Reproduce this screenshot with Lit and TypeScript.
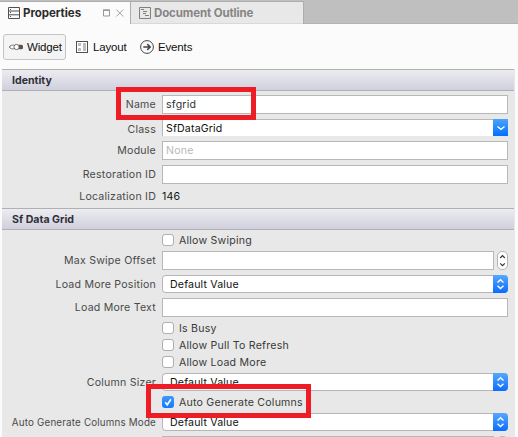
import { LitElement, html, css, svg, nothing } from "lit";
import { customElement } from "lit/decorators.js";
import { styleMap } from "lit/directives/style-map.js";

type Kind = "text" | "combo" | "select" | "stepper" | "check" | "static";

interface Row {
  kind: Kind;
  label?: string;
  value?: string;
  placeholder?: string;
  checked?: boolean;
  small?: boolean;
  gap: number;
}

const identity: Row[] = [
  { kind: "text", label: "Name", value: "sfgrid", gap: 4 },
  { kind: "combo", label: "Class", value: "SfDataGrid", gap: 5 },
  { kind: "text", label: "Module", placeholder: "None", gap: 4 },
  { kind: "text", label: "Restoration ID", gap: 5 },
  { kind: "static", label: "Localization ID", value: "146", gap: 3 },
];

const dataGrid: Row[] = [
  { kind: "check", value: "Allow Swiping", gap: 4 },
  { kind: "stepper", label: "Max Swipe Offset", gap: 5 },
  { kind: "select", label: "Load More Position", value: "Default Value", gap: 5 },
  { kind: "text", label: "Load More Text", gap: 5 },
  { kind: "check", value: "Is Busy", gap: 5 },
  { kind: "check", value: "Allow Pull To Refresh", gap: 5 },
  { kind: "check", value: "Allow Load More", gap: 5 },
  { kind: "select", label: "Column Sizer", value: "Default Value", gap: 5 },
  { kind: "check", value: "Auto Generate Columns", checked: true, gap: 5 },
  { kind: "select", label: "Auto Generate Columns Mode", value: "Default Value", small: true, gap: 5 },
  { kind: "stepper", gap: 5 },
];

@customElement("app-root")
export class AppRoot extends LitElement {
  static styles = css`
    :host {
      display: block;
      position: relative;
      width: 518px;
      height: 437px;
      overflow: hidden;
      background: #fbfbfb;
      font-family: Inter, "Liberation Sans", sans-serif;
      font-size: 10.6px;
      letter-spacing: 0.22px;
      color: #4a4a4a;
      white-space: nowrap;
    }
    * { box-sizing: border-box; }
    svg { display: block; flex: none; }
    .tabs {
      display: flex;
      height: 24px;
      padding-top: 1px;
      background: #bfbfbf;
      box-shadow: inset 0 -1px #b3b3b3;
    }
    .tab {
      display: flex;
      align-items: center;
      height: 23px;
      border-top: 1px solid #adadad;
      border-right: 1px solid #adadad;
      font-size: 11.5px;
      font-weight: 700;
    }
    .tab.active { width: 131px; padding-left: 8px; background: #fbfbfb; color: #2b2b2b; }
    .tab.idle { width: 173px; padding-left: 8px; background: #e8e8e8; color: #858585; box-shadow: inset 0 -1px #d9d9d9; }
    .tab.active .name { width: 80px; margin-left: 3px; letter-spacing: -0.05px; }
    .tab.idle .name { margin-left: 3px; letter-spacing: -0.12px; }
    .tools {
      display: flex;
      align-items: center;
      height: 45px;
      padding: 1px 0 0 3px;
      font-family: "Liberation Sans", sans-serif;
      font-size: 11.5px;
      letter-spacing: -0.15px;
      color: #111;
    }
    .tool { display: flex; align-items: center; height: 26px; }
    .tool span { line-height: 24px; }
    .tool.on { width: 63px; padding-left: 5px; gap: 4px; border: 1px solid #c4c4c4; border-radius: 3px; background: #f4f4f4; }
    .tool.layout { margin-left: 10px; gap: 5px; width: 64px; }
    .tool.events { gap: 4px; }
    .body { width: 513px; height: 368px; margin-left: 2px; background: #e8e8e8; overflow: hidden; }
    .group.identity { height: 139px; }
    .head {
      width: 512px;
      height: 22px;
      padding-left: 10px;
      line-height: 21px;
      border-top: 1px solid #b0b0b3;
      border-bottom: 1px solid #b0b0b3;
      background: linear-gradient(#ececf1, #d0d0de);
      font-weight: 700;
      letter-spacing: 0;
      color: #303038;
    }
    .row { display: flex; align-items: center; }
    .label { flex: none; width: 154px; margin-right: 6px; text-align: right; line-height: 18px; }
    .label.small { font-size: 9.8px; letter-spacing: 0.18px; }
    .text, .stepper { height: 19px; }
    .combo, .select { height: 18px; }
    .check { height: 12px; }
    .static { height: 18px; }
    .select .label, .static .label { padding-top: 2px; }
    .combo .label { padding-top: 4px; }
    .field { width: 346px; height: 19px; padding-left: 3px; border: 1px solid #b8b8b8; background: #fff; line-height: 18px; color: #333; }
    .stepper .field { width: 332px; }
    .ghost { color: #b9b9b9; }
    .picker { display: flex; justify-content: space-between; width: 346px; height: 18px; line-height: 20px; letter-spacing: 0.16px; color: #111; background: #fff; overflow: hidden; }
    .combo .picker { height: 17px; margin-bottom: 1px; padding-left: 3px; border-left: 1px solid #b8b8b8; }
    .combo .shown { flex: 1; margin-left: -3px; padding-left: 3px; border-top: 1px solid #b8b8b8; line-height: 18px; }
    .select .picker { border-radius: 4px; padding-left: 8px; box-shadow: inset 0 0 0 1px #b6b6b6; }
    .cap { width: 15px; height: 100%; background: linear-gradient(#57a8fb, #0a6cff); }
    .combo .cap { background: linear-gradient(#4da3fa, #0070ff); }
    .steps { margin-left: 3px; }
    .box { width: 12px; height: 12px; border: 1px solid #adadad; border-radius: 3px; background: #fff; }
    .box.checked { border: 0; background: linear-gradient(#3f98fb, #147bfb); }
    .caption { margin-left: 5px; padding-top: 2px; line-height: 12px; color: #3a3a3a; }
    .plain { color: #111; }
    .mark { position: absolute; border: 5px solid #ee1c25; }
  `;

  private control(r: Row) {
    switch (r.kind) {
      case "text":
        return html`<div class="field">${r.placeholder ? html`<span class="ghost">${r.placeholder}</span>` : r.value}</div>`;
      case "combo":
        return html`<div class="picker"><span class="shown">${r.value}</span>
          <svg class="cap" viewBox="0 0 15 17"><path d="M4.5 7.5 L8 10.3 L11.5 7.5" fill="none" stroke="#fff" stroke-width="1.4" /></svg></div>`;
      case "select":
        return html`<div class="picker"><span class="shown">${r.value}</span>
          <svg class="cap" viewBox="0 0 15 18"><path d="M4.5 7.5 L7.5 4.7 L10.5 7.5 M4.5 10.7 L7.5 13.5 L10.5 10.7" fill="none" stroke="#fff" stroke-width="1.4" /></svg></div>`;
      case "stepper":
        return html`<div class="field"></div>
          <svg class="steps" width="11" height="19" viewBox="0 0 11 19">
            <rect x="0.5" y="0.5" width="10" height="18" rx="4.5" fill="#fff" stroke="#b4b4b4" />
            <path d="M3.2 7 L5.5 4.7 L7.8 7 M3.2 12.3 L5.5 14.6 L7.8 12.3" fill="none" stroke="#333" stroke-width="1.2" />
          </svg>`;
      case "check":
        return html`${r.checked
            ? html`<svg class="box checked" viewBox="0 0 12 12"><path d="M3.2 6.3 L5.2 8.8 L8.9 3.2" fill="none" stroke="#fff" stroke-width="1.6" /></svg>`
            : html`<span class="box"></span>`}<span class="caption">${r.value}</span>`;
      default:
        return html`<span class="plain">${r.value}</span>`;
    }
  }

  private row(r: Row) {
    return html`<div class="row ${r.kind}" style=${styleMap({ marginTop: `${r.gap}px` })}>
      <span class="label ${r.small ? "small" : ""}">${r.label ?? nothing}</span>${this.control(r)}
    </div>`;
  }

  render() {
    const dots = [2.5, 5.5, 9.5].map((y) => svg`<rect x="2" y=${y - 0.5} width="1" height="1" fill="#555" />`);
    return html`
      <div class="tabs">
        <div class="tab active">
          <svg width="12" height="12" viewBox="0 0 12 12">
            <path d="M0.5 0.5H11.5V11.5H0.5Z M0.5 4H11.5 M0.5 7.8H11.5" fill="none" stroke="#505050" />${dots}
          </svg>
          <span class="name">Properties</span>
          <svg width="21" height="8" viewBox="0 0 21 8">
            <path d="M0.5 1H6.5V7H0.5Z" fill="none" stroke="#999" />
            <path d="M0 1.2H7" stroke="#999" stroke-width="1.4" />
            <path d="M13.3 0.5L20.3 7.5M20.3 0.5L13.3 7.5" stroke="#999" stroke-width="0.9" />
          </svg>
        </div>
        <div class="tab idle">
          <svg width="12" height="12" viewBox="0 0 12 12">
            <path d="M0.5 0.5H11.5V11.5H0.5Z M2 2.5H5 M4 4.5H8 M4 6.5H7 M6 8.5H10" fill="none" stroke="#808080" />
          </svg>
          <span class="name">Document Outline</span>
        </div>
      </div>
      <div class="tools">
        <div class="tool on">
          <svg width="14" height="8" viewBox="0 0 14 8">
            <path d="M0 4H3" stroke="#777" stroke-width="1.4" />
            <rect x="1" y="2.2" width="5" height="3.6" rx="1.6" fill="#fff" stroke="#777" />
            <rect x="9" y="1.7" width="5" height="4.6" rx="1.5" fill="#555" />
            <rect x="5" y="1.5" width="5" height="5" rx="2.2" fill="#fff" stroke="#666" />
          </svg>
          <span>Widget</span>
        </div>
        <div class="tool layout">
          <svg width="12" height="12" viewBox="0 0 12 12">
            <rect x="0.5" y="0.5" width="11" height="11" fill="#fff" stroke="#505050" />
            <path d="M2 2H5V5H2Z M2 7H5V10H2Z M7 2H10V10H7Z" fill="#bdbdbd" />
          </svg>
          <span>Layout</span>
        </div>
        <div class="tool events">
          <svg width="14" height="14" viewBox="0 0 14 14">
            <circle cx="7" cy="7" r="6.4" fill="none" stroke="#444" />
            <path d="M3.3 7H10 M7.2 4.1L10.2 7L7.2 9.9" fill="none" stroke="#444" stroke-width="1.5" />
          </svg>
          <span>Events</span>
        </div>
      </div>
      <div class="body">
        <div class="group identity"><div class="head">Identity</div>${identity.map((r) => this.row(r))}</div>
        <div class="group"><div class="head">Sf Data Grid</div>${dataGrid.map((r) => this.row(r))}</div>
      </div>
      <div class="mark" style=${styleMap({ left: "116px", top: "87px", width: "140px", height: "33px" })}></div>
      <div class="mark" style=${styleMap({ left: "146px", top: "384px", width: "165px", height: "34px" })}></div>
    `;
  }
}
